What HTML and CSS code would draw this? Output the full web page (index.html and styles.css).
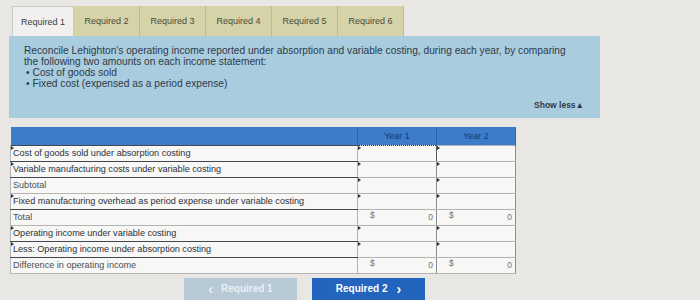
FILE: index.html
```html
<!DOCTYPE html>
<html>
<head>
<meta charset="utf-8">
<link rel="stylesheet" href="styles.css">
</head>
<body>
<div class="page">
  <div class="tabs">
    <div class="tab active">Required 1</div>
    <div class="tab">Required 2</div>
    <div class="tab">Required 3</div>
    <div class="tab">Required 4</div>
    <div class="tab">Required 5</div>
    <div class="tab">Required 6</div>
  </div>
  <div class="panel">
    <p class="intro">Reconcile Lehighton's operating income reported under absorption and variable costing, during each year, by comparing<br>the following two amounts on each income statement:</p>
    <ul class="bullets">
      <li>Cost of goods sold</li>
      <li>Fixed cost (expensed as a period expense)</li>
    </ul>
    <div class="showless">Show less&#9650;</div>
  </div>
  <table class="grid">
    <thead>
      <tr><th class="lab"></th><th class="yr">Year 1</th><th class="yr">Year 2</th></tr>
    </thead>
    <tbody>
      <tr class="inp"><td class="lab mark">Cost of goods sold under absorption costing</td><td class="val mark focus"></td><td class="val mark"></td></tr>
      <tr class="inp"><td class="lab mark">Variable manufacturing costs under variable costing</td><td class="val mark"></td><td class="val mark"></td></tr>
      <tr class="calc"><td class="lab">Subtotal</td><td class="val mark"></td><td class="val mark"></td></tr>
      <tr class="inp"><td class="lab mark">Fixed manufacturing overhead as period expense under variable costing</td><td class="val mark"></td><td class="val mark"></td></tr>
      <tr class="calc"><td class="lab">Total</td><td class="val"><span class="cur">$</span><span class="num">0</span></td><td class="val"><span class="cur">$</span><span class="num">0</span></td></tr>
      <tr class="inp"><td class="lab mark">Operating income under variable costing</td><td class="val mark"></td><td class="val mark"></td></tr>
      <tr class="inp"><td class="lab mark">Less: Operating income under absorption costing</td><td class="val mark"></td><td class="val mark"></td></tr>
      <tr class="calc"><td class="lab">Difference in operating income</td><td class="val"><span class="cur">$</span><span class="num">0</span></td><td class="val"><span class="cur">$</span><span class="num">0</span></td></tr>
    </tbody>
  </table>
  <div class="nav">
    <div class="btn prev"><span class="chev">&lsaquo;</span>Required 1</div>
    <div class="btn next">Required 2<span class="chev after">&rsaquo;</span></div>
  </div>
</div>
</body>
</html>
```

FILE: styles.css
```css
* { box-sizing: border-box; }
html, body { margin: 0; padding: 0; }
body {
  background: #e9e7e3;
  font-family: "Liberation Sans", Arial, sans-serif;
  color: #2f3640;
  width: 700px;
  height: 300px;
  overflow: hidden;
}
.page { padding: 6px 0 0 9px; }
.tabs {
  display: flex;
  padding-left: 3px;
  height: 30px;
}
.tab {
  width: 66px;
  background: #d6d3a8;
  border-right: 1px solid #bdbb95;
  font-size: 9px;
  color: #4a4a40;
  display: flex;
  align-items: center;
  justify-content: center;
}
.tab.active {
  width: 62px;
  background: #f1f0ee;
  border: 1px solid #c9c9c6;
  border-bottom: none;
  color: #3c3f45;
}
.panel {
  width: 591px;
  height: 82px;
  background: #a9cddf;
  padding: 9px 16px 0 15px;
  display: flex;
  flex-direction: column;
}
.intro {
  margin: 0;
  font-size: 10.2px;
  line-height: 11px;
  color: #2d3a48;
}
.bullets {
  margin: 0;
  padding: 0 0 0 2px;
  list-style: none;
  font-size: 10.2px;
  line-height: 11px;
  color: #2d3a48;
}
.bullets li::before { content: "\2022"; margin-right: 3px; }
.showless {
  margin-top: 11px;
  text-align: right;
  font-size: 8.5px;
  font-weight: bold;
  color: #2d3a48;
}
.grid {
  margin-top: 9px;
  margin-left: 1px;
  border-collapse: collapse;
  width: 505px;
  table-layout: fixed;
}
.grid th {
  background: #3c7cc9;
  height: 18px;
  font-size: 9px;
  font-weight: normal;
  color: #173a74;
  border-right: 1px solid #2f63a8;
  padding: 0;
}
.grid th.lab { width: 347px; }
.grid th.yr { width: 79px; }
.grid td {
  height: 16px;
  padding: 0 0 0 2px;
  background: #f7f7f6;
  border: 1px solid #b4b4b6;
  font-size: 9.1px;
  color: #2c3138;
  white-space: nowrap;
  position: relative;
}
.grid tr.inp td.lab { border-top: 1.5px solid #45474f; border-bottom: 1.5px solid #45474f; }
.grid td.val { border-left: 1.5px solid #55575e; border-right: 1.5px solid #8a8b90; }
.grid tr.calc td.lab { color: #4a4f57; }
.grid td.mark::before {
  content: "";
  position: absolute;
  left: 0;
  top: 0;
  border-top: 2px solid transparent;
  border-bottom: 2px solid transparent;
  border-left: 3px solid #30333a;
}
.grid td.focus { border: 1px dotted #333; }
.grid td.val span { display: inline-block; font-size: 8.5px; color: #6f7378; }
.grid td.val .cur { padding-left: 10px; }
.grid td.val .num { float: right; padding-right: 3px; line-height: 14px; }
.nav {
  width: 591px;
  display: flex;
  justify-content: center;
  gap: 15px;
  margin-top: 4px;
}
.btn {
  width: 113px;
  height: 22px;
  display: flex;
  align-items: center;
  justify-content: center;
  font-size: 10px;
  font-weight: bold;
  color: #fff;
}
.chev { font-size: 14px; line-height: 10px; margin-right: 8px; }
.chev.after { margin: 0 0 0 9px; }
.btn.prev { background: #b8cad5; color: #e8f0f5; }
.btn.next { background: #2264be; }
```
